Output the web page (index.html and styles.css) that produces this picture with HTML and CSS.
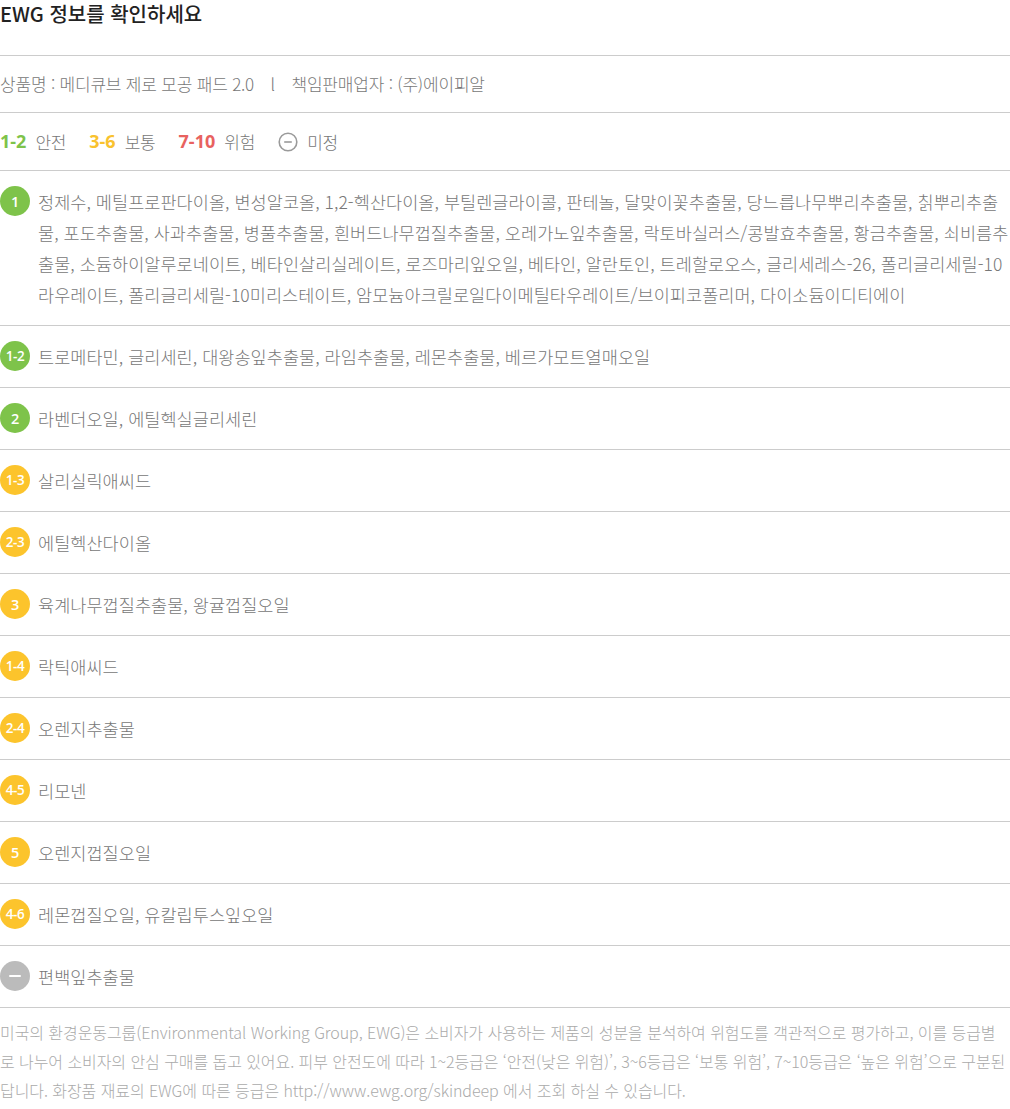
FILE: index.html
```html
<!DOCTYPE html>
<html lang="ko">
<head>
<meta charset="UTF-8" />
<meta name="viewport" content="width=device-width, initial-scale=1" />
<title>EWG 정보</title>
<link rel="stylesheet" href="styles.css">
</head>
<body>
<main class="ewg">
  <h1 class="ewg-title">EWG 정보를 확인하세요</h1>

  <div class="ewg-product">
    상품명 : 메디큐브 제로 모공 패드 2.0 <span class="sep">l</span> 책임판매업자 : (주)에이피알
  </div>

  <div class="ewg-legend">
    <span class="lg"><b class="num green">1-2</b> 안전</span>
    <span class="lg"><b class="num yellow">3-6</b> 보통</span>
    <span class="lg"><b class="num red">7-10</b> 위험</span>
    <span class="lg">
      <svg class="none-icon" width="20" height="20" viewBox="0 0 20 20" aria-hidden="true">
        <circle cx="10" cy="10" r="8.8" fill="none" stroke="#9a9a9a" stroke-width="1.6" />
        <line x1="6.2" y1="10" x2="13.8" y2="10" stroke="#9a9a9a" stroke-width="1.6" />
      </svg>
      미정
    </span>
  </div>

  <ul class="ewg-list">
    <li class="row">
      <span class="badge green">1</span>
      <p class="names">정제수, 메틸프로판다이올, 변성알코올, 1,2-헥산다이올, 부틸렌글라이콜, 판테놀, 달맞이꽃추출물, 당느릅나무뿌리추출물, 칡뿌리추출물, 포도추출물, 사과추출물, 병풀추출물, 흰버드나무껍질추출물, 오레가노잎추출물, 락토바실러스/콩발효추출물, 황금추출물, 쇠비름추출물, 소듐하이알루로네이트, 베타인살리실레이트, 로즈마리잎오일, 베타인, 알란토인, 트레할로오스, 글리세레스-26, 폴리글리세릴-10라우레이트, 폴리글리세릴-10미리스테이트, 암모늄아크릴로일다이메틸타우레이트/브이피코폴리머, 다이소듐이디티에이</p>
    </li>
    <li class="row">
      <span class="badge green small">1-2</span>
      <p class="names">트로메타민, 글리세린, 대왕송잎추출물, 라임추출물, 레몬추출물, 베르가모트열매오일</p>
    </li>
    <li class="row">
      <span class="badge green">2</span>
      <p class="names">라벤더오일, 에틸헥실글리세린</p>
    </li>
    <li class="row">
      <span class="badge yellow small">1-3</span>
      <p class="names">살리실릭애씨드</p>
    </li>
    <li class="row">
      <span class="badge yellow small">2-3</span>
      <p class="names">에틸헥산다이올</p>
    </li>
    <li class="row">
      <span class="badge yellow">3</span>
      <p class="names">육계나무껍질추출물, 왕귤껍질오일</p>
    </li>
    <li class="row">
      <span class="badge yellow small">1-4</span>
      <p class="names">락틱애씨드</p>
    </li>
    <li class="row">
      <span class="badge yellow small">2-4</span>
      <p class="names">오렌지추출물</p>
    </li>
    <li class="row">
      <span class="badge yellow small">4-5</span>
      <p class="names">리모넨</p>
    </li>
    <li class="row">
      <span class="badge yellow">5</span>
      <p class="names">오렌지껍질오일</p>
    </li>
    <li class="row">
      <span class="badge yellow small">4-6</span>
      <p class="names">레몬껍질오일, 유칼립투스잎오일</p>
    </li>
    <li class="row">
      <span class="badge gray"><i class="dash"></i></span>
      <p class="names">편백잎추출물</p>
    </li>
  </ul>

  <p class="ewg-note">미국의 환경운동그룹(Environmental Working Group, EWG)은 소비자가 사용하는 제품의 성분을 분석하여 위험도를 객관적으로 평가하고, 이를 등급별로 나누어 소비자의 안심 구매를 돕고 있어요. 피부 안전도에 따라 1~2등급은 ‘안전(낮은 위험)’, 3~6등급은 ‘보통 위험’, 7~10등급은 ‘높은 위험’으로 구분된답니다. 화장품 재료의 EWG에 따른 등급은 http://www.ewg.org/skindeep 에서 조회 하실 수 있습니다.</p>
</main>
</body>
</html>
```

FILE: styles.css
```css
body {
  margin: 0;
  background: #fff;
  font-family: "Noto Sans CJK KR", "Noto Sans", sans-serif;
  color: #777;
}
.ewg {
  width: 1010px;
}
.ewg-title {
  margin: 0;
  padding: 0 0 27px;
  font-size: 20px;
  line-height: 28px;
  font-weight: 500;
  color: #222;
  border-bottom: 1px solid #ccc;
}
.ewg-product {
  padding: 15px 0;
  font-size: 17px;
  line-height: 26px;
  font-weight: 300;
  color: #777;
  border-bottom: 1px solid #ccc;
  letter-spacing: -0.2px;
}
.ewg-product .sep {
  margin: 0 12px;
}
.ewg-legend {
  display: flex;
  align-items: center;
  gap: 23px;
  padding: 15px 0;
  font-size: 17px;
  line-height: 27px;
  font-weight: 300;
  color: #777;
  letter-spacing: -0.2px;
  border-bottom: 1px solid #ccc;
}
.lg {
  display: flex;
  align-items: center;
  gap: 9px;
}
.num {
  font-family: "Open Sans", "Noto Sans", sans-serif;
  font-weight: 700;
  font-size: 18px;
  letter-spacing: 0;
}
.num.green { color: #7ec34a; }
.num.yellow { color: #f9c22e; }
.num.red { color: #e8625f; }
.none-icon {
  display: block;
}
.ewg-list {
  list-style: none;
  margin: 0;
  padding: 0;
}
.row {
  display: flex;
  align-items: flex-start;
  gap: 8px;
  padding: 15px 0;
  border-bottom: 1px solid #ccc;
}
.badge {
  flex: none;
  width: 30px;
  height: 30px;
  border-radius: 50%;
  display: flex;
  align-items: center;
  justify-content: center;
  color: #fff;
  font-family: "Open Sans", "Noto Sans", sans-serif;
  font-weight: 600;
  font-size: 14.5px;
  letter-spacing: -0.3px;
}
.badge.small {
  font-size: 13.5px;
  letter-spacing: -0.4px;
}
.badge.green { background: #7ec34a; }
.badge.yellow { background: #fcc42c; }
.badge.gray { background: #bbb; }
.dash {
  display: block;
  width: 12px;
  height: 2.5px;
  background: #fff;
  border-radius: 1px;
}
.names {
  margin: 0;
  font-size: 17.5px;
  line-height: 31px;
  font-weight: 300;
  color: #777;
  letter-spacing: 0.05px;
}
.ewg-note {
  margin: 0;
  padding: 10px 0;
  font-size: 16px;
  line-height: 29px;
  font-weight: 300;
  color: #aaa;
  letter-spacing: -0.07px;
}
```
